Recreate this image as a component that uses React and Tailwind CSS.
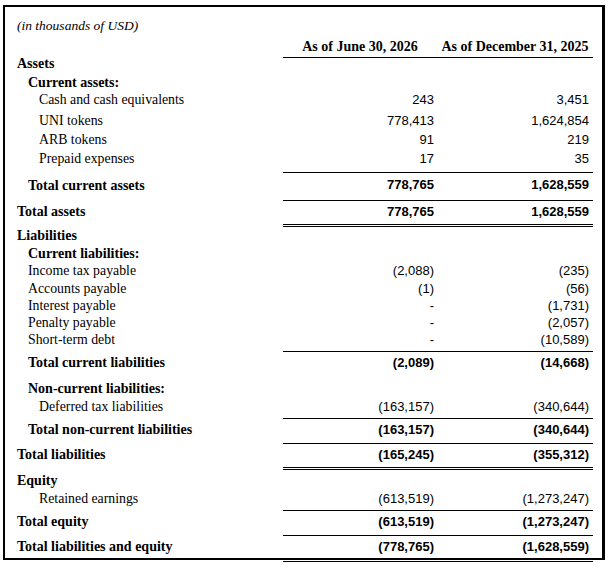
import React from "react";

const SERIF = "font-['Liberation_Serif',serif] text-black";
const SANS = "font-['Liberation_Sans',sans-serif] text-black text-[13px]";

function Row({ rowCls, label, labelCls, v1, v2, bold, top, dbl }) {
  const borderCls =
    (top ? "border-t " : "") + (dbl ? "border-b-[3px] border-double pb-[2px] " : "");
  const numBorder = borderCls + "border-black";
  const lblBorder = borderCls + "border-transparent";
  return (
    <div className={"grid grid-cols-[278px_154px_156px] " + rowCls}>
      <div className={"flex items-center " + lblBorder}>
        <span className={SERIF + " whitespace-nowrap " + labelCls}>{label}</span>
      </div>
      <div className={"flex items-center justify-end pr-[3px] " + numBorder}>
        <span className={SANS + (bold ? " font-bold" : "")}>{v1}</span>
      </div>
      <div className={"flex items-center justify-end pr-[4px] " + numBorder}>
        <span className={SANS + (bold ? " font-bold" : "")}>{v2}</span>
      </div>
    </div>
  );
}

const L1 = "pl-[12px]";
const L2 = "pl-[23px]";
const L3 = "pl-[34px]";
const B = "font-bold text-[14px]";
const R = "text-[13.8px] pt-px";

export default function App() {
  return (
    <div className="w-[608px] h-[564px] bg-white overflow-hidden">
      <div className="ml-[3px] mt-[5px] w-[602px] h-[555px] border-l-2 border-t-2 border-b-2 border-r-[3px] border-black pt-[9px]">
        <div className="h-[20px] flex items-center pl-[12px]">
          <span className={SERIF + " italic text-[13.5px]"}>(in thousands of USD)</span>
        </div>
        <div className="grid grid-cols-[278px_154px_156px] h-[17px]">
          <div className="border-b border-transparent"></div>
          <div className="flex items-center justify-center border-b border-black">
            <span className={SERIF + " font-bold text-[14px] whitespace-nowrap"}>As of June 30, 2026</span>
          </div>
          <div className="flex items-center justify-center border-b border-black">
            <span className={SERIF + " font-bold text-[14px] whitespace-nowrap"}>As of December 31, 2025</span>
          </div>
        </div>

        <Row rowCls="h-[19px]" label="Assets" labelCls={L1 + " " + B} />
        <Row rowCls="h-[17px]" label="Current assets:" labelCls={L2 + " " + B} />
        <Row rowCls="h-[21px]" label="Cash and cash equivalents" labelCls={L3 + " " + R} v1="243" v2="3,451" />
        <Row rowCls="h-[19px]" label="UNI tokens" labelCls={L3 + " " + R} v1="778,413" v2="1,624,854" />
        <Row rowCls="h-[19px]" label="ARB tokens" labelCls={L3 + " " + R} v1="91" v2="219" />
        <Row rowCls="h-[17px]" label="Prepaid expenses" labelCls={L3 + " " + R} v1="17" v2="35" />
        <Row rowCls="mt-[7px] h-[25px]" top bold label="Total current assets" labelCls={L2 + " " + B} v1="778,765" v2="1,628,559" />
        <Row rowCls="mt-[3px] h-[19px]" top dbl bold label="Total assets" labelCls={L1 + " " + B} v1="778,765" v2="1,628,559" />

        <Row rowCls="mt-[6px] h-[18px]" label="Liabilities" labelCls={L1 + " " + B} />
        <Row rowCls="h-[17px]" label="Current liabilities:" labelCls={L2 + " " + B} />
        <Row rowCls="h-[18px]" label="Income tax payable" labelCls={L2 + " " + R} v1="(2,088)" v2="(235)" />
        <Row rowCls="h-[17px]" label="Accounts payable" labelCls={L2 + " " + R} v1="(1)" v2="(56)" />
        <Row rowCls="h-[17px]" label="Interest payable" labelCls={L2 + " " + R} v1="-" v2="(1,731)" />
        <Row rowCls="h-[17px]" label="Penalty payable" labelCls={L2 + " " + R} v1="-" v2="(2,057)" />
        <Row rowCls="h-[17px]" label="Short-term debt" labelCls={L2 + " " + R} v1="-" v2="(10,589)" />
        <Row rowCls="mt-[5px] h-[21px]" top bold label="Total current liabilities" labelCls={L2 + " " + B} v1="(2,089)" v2="(14,668)" />
        <Row rowCls="mt-[6px] h-[18px]" label="Non-current liabilities:" labelCls={L2 + " " + B} />
        <Row rowCls="h-[17px]" label="Deferred tax liabilities" labelCls={L3 + " " + R} v1="(163,157)" v2="(340,644)" />
        <Row rowCls="mt-[5px] h-[19px]" top bold label="Total non-current liabilities" labelCls={L2 + " " + B} v1="(163,157)" v2="(340,644)" />
        <Row rowCls="mt-[6px] h-[19px]" top dbl bold label="Total liabilities" labelCls={L1 + " " + B} v1="(165,245)" v2="(355,312)" />

        <Row rowCls="mt-[8px] h-[18px]" label="Equity" labelCls={L1 + " " + B} />
        <Row rowCls="h-[17px]" label="Retained earnings" labelCls={L3 + " " + R} v1="(613,519)" v2="(1,273,247)" />
        <Row rowCls="mt-[5px] h-[19px]" top bold label="Total equity" labelCls={L1 + " " + B} v1="(613,519)" v2="(1,273,247)" />
        <Row rowCls="mt-[6px] h-[19px]" top dbl bold label="Total liabilities and equity" labelCls={L1 + " " + B} v1="(778,765)" v2="(1,628,559)" />
      </div>
    </div>
  );
}
